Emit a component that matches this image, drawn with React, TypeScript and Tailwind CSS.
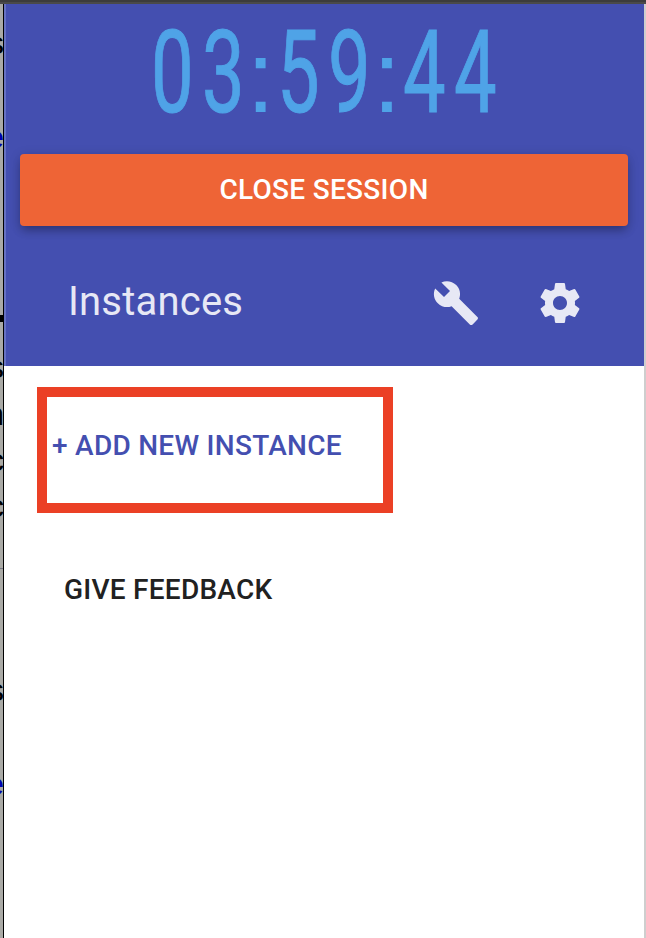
import React from "react";

const digits = ["0", "3", ":", "5", "9", ":", "4", "4"];

const pageText = [
  { char: "s", place: "top-[27px] text-black" },
  { char: "e", place: "top-[121px] text-[#0000b0]" },
  { char: "s", place: "top-[351px] text-black" },
  { char: "n", place: "top-[398px] text-black" },
  { char: "c", place: "top-[444px] text-black" },
  { char: "c", place: "top-[490px] text-black" },
  { char: "s", place: "top-[674px] text-black" },
  { char: "e", place: "top-[768px] text-[#0000b0]" },
];

function Clock() {
  return (
    <div className="flex h-[150px] items-baseline pl-[143px] leading-[138px] text-[#4fa3e7]">
      {digits.map((char, i) =>
        char === ":" ? (
          <span key={i} className="flex w-[25px] shrink-0 justify-center font-['Liberation_Sans',sans-serif] text-[102px]">
            <span className="inline-block">:</span>
          </span>
        ) : (
          <span
            key={i}
            className="flex w-[50.6px] shrink-0 justify-center font-['Roboto',sans-serif] text-[115px] [-webkit-text-stroke:1px_#4fa3e7]"
          >
            <span className="inline-block scale-x-[0.66]">{char}</span>
          </span>
        ),
      )}
    </div>
  );
}

export default function App() {
  return (
    <div className="flex h-[938px] w-[646px] flex-col overflow-hidden bg-white font-['Roboto',sans-serif]">
      <div className="h-1 shrink-0 border-b-2 border-[#4a4a4a] bg-[#3c3c3c]" />
      <div className="flex min-h-0 flex-1">
        <aside className="w-1 shrink-0 border-r border-black bg-[#aaaaa6]">
          <div className="relative -mt-1 h-[938px] w-[3px] overflow-hidden font-['Liberation_Sans',sans-serif] text-[32px] leading-[32px]">
            {pageText.map((t, i) => (
              <span key={i} className={"absolute -right-px " + t.place}>{t.char}</span>
            ))}
            <i className="absolute top-[315px] left-0 h-[7px] w-[3px] bg-black" />
            <i className="absolute top-[568px] left-0 h-px w-[3px] bg-[#777783]" />
          </div>
        </aside>
        <main className="w-[640px] shrink-0">
          <header className="h-[362px] border-l-2 border-[#6671c2] bg-[#444fb0] pr-4 pl-[14px]">
            <div className="-ml-4"><Clock /></div>
            <button className="flex h-[72px] w-full items-center justify-center rounded-[4px] bg-[#ee6436] pb-[2px] text-[28px] leading-[49px] font-medium tracking-[0.3px] text-white shadow-[0_6px_10px_-2px_rgba(0,0,0,0.25),0_2px_12px_rgba(0,0,0,0.16)]">
              CLOSE SESSION
            </button>
            <div className="flex h-[136px] items-center pt-[18px] pl-12 text-[#e7e8f5]">
              <h1 className="w-[364px] pb-[2px] text-[40px] leading-[56px] font-normal tracking-[0.2px]">Instances</h1>
              <svg viewBox="0 0 24 24" fill="currentColor" className="size-12 shrink-0">
                <path d="M22.7 19l-9.1-9.1c.9-2.3.4-5-1.5-6.9-2-2-5-2.4-7.4-1.3L9 6 6 9 1.6 4.7C.4 7.1.9 10.1 2.9 12.1c1.9 1.9 4.6 2.4 6.9 1.5l9.1 9.1c.4.4 1 .4 1.4 0l2.3-2.3c.5-.4.5-1.1.1-1.4z" />
              </svg>
              <svg viewBox="0 0 24 24" fill="currentColor" className="ml-14 size-12 shrink-0">
                <path d="M19.43 12.98c.04-.32.07-.64.07-.98s-.03-.66-.07-.98l2.11-1.65c.19-.15.24-.42.12-.64l-2-3.46c-.12-.22-.39-.3-.61-.22l-2.49 1c-.52-.4-1.08-.73-1.69-.98l-.38-2.65C14.46 2.18 14.25 2 14 2h-4c-.25 0-.46.18-.49.42l-.38 2.65c-.61.25-1.17.59-1.69.98l-2.49-1c-.23-.09-.49 0-.61.22l-2 3.46c-.13.22-.07.49.12.64l2.11 1.65c-.04.32-.07.65-.07.98s.03.66.07.98l-2.11 1.65c-.19.15-.24.42-.12.64l2 3.46c.12.22.39.3.61.22l2.49-1c.52.4 1.08.73 1.69.98l.38 2.65c.03.24.24.42.49.42h4c.25 0 .46-.18.49-.42l.38-2.65c.61-.25 1.17-.59 1.69-.98l2.49 1c.23.09.49 0 .61-.22l2-3.46c.12-.22.07-.49-.12-.64l-2.11-1.65zM12 15.5c-1.93 0-3.5-1.57-3.5-3.5s1.57-3.5 3.5-3.5 3.5 1.57 3.5 3.5-1.57 3.5-3.5 3.5z" />
              </svg>
            </div>
          </header>
          <button className="mt-[21px] ml-[33px] flex h-[126px] w-[356px] items-center border-[10px] border-[#eb4025] pb-[8px] pl-[5px] text-[28px] font-medium tracking-[0.27px] text-[#444fb0]">
            + ADD NEW INSTANCE
          </button>
          <button className="mt-[52px] ml-[60px] block h-[50px] text-[28px] leading-[50px] font-medium tracking-[0.25px] text-[#212121]">
            GIVE FEEDBACK
          </button>
        </main>
        <div className="w-0.5 bg-[#cecece]" />
      </div>
    </div>
  );
}
